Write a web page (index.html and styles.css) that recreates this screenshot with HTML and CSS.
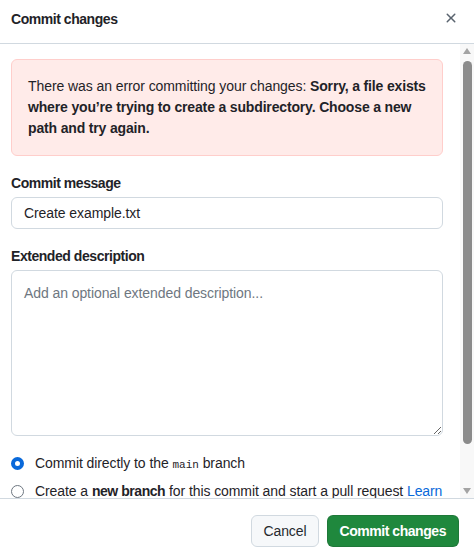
FILE: index.html
```html
<!DOCTYPE html>
<html lang="en">
<head>
<meta charset="utf-8">
<title>Commit changes</title>
<link rel="stylesheet" href="styles.css">
</head>
<body>
<div class="dialog">
  <header class="dialog-header">
    <h1 class="dialog-title">Commit changes</h1>
    <button class="close-btn" type="button" aria-label="Close">
      <svg viewBox="0 0 16 16" width="16" height="16" aria-hidden="true"><path d="M3.72 3.72a.75.75 0 0 1 1.06 0L8 6.94l3.22-3.22a.749.749 0 0 1 1.275.326.749.749 0 0 1-.215.734L9.06 8l3.22 3.220a.749.749 0 0 1-.326 1.275.749.749 0 0 1-.734-.215L8 9.06l-3.22 3.22a.751.751 0 0 1-1.042-.018.751.751 0 0 1-.018-1.042L6.940 8 3.720 4.78a.75.75 0 0 1 0-1.060Z"/></svg>
    </button>
  </header>
  <div class="dialog-body">
    <div class="body-content">
      <div class="flash-error">There was an error committing your changes: <strong>Sorry, a file exists where you’re trying to create a subdirectory. Choose a new path and try again.</strong></div>
      <label class="field-label" for="msg">Commit message</label>
      <input id="msg" class="text-input" type="text" value="Create example.txt">
      <label class="field-label" for="desc">Extended description</label>
      <textarea id="desc" class="text-area" placeholder="Add an optional extended description..."></textarea>
      <div class="radio-group">
        <label class="radio-row"><input type="radio" name="branch" class="radio" checked><span class="radio-text">Commit directly to the <code>main</code> branch</span></label>
        <label class="radio-row"><input type="radio" name="branch" class="radio"><span class="radio-text">Create a <strong>new branch</strong> for this commit and start a pull request <a class="link" href="#">Learn more about pull requests</a></span></label>
      </div>
    </div>
    <div class="scrollbar" aria-hidden="true">
      <span class="sb-arrow sb-up"></span>
      <span class="sb-thumb"></span>
      <span class="sb-spacer"></span>
      <span class="sb-arrow sb-down"></span>
    </div>
  </div>
  <footer class="dialog-footer">
    <button class="btn btn-default" type="button">Cancel</button>
    <button class="btn btn-primary" type="button">Commit changes</button>
  </footer>
</div>
</body>
</html>
```

FILE: styles.css
```css
* { box-sizing: border-box; }

html, body {
  margin: 0;
  padding: 0;
  background: #ffffff;
}

body {
  font-family: "Liberation Sans", Arial, sans-serif;
  font-size: 14px;
  line-height: 20px;
  color: #1f2328;
  letter-spacing: -0.08px;
}

.dialog {
  width: 474px;
  height: 560px;
  display: flex;
  flex-direction: column;
  background: #ffffff;
  overflow: hidden;
}

.dialog-header {
  height: 44px;
  flex: none;
  display: flex;
  align-items: flex-start;
  justify-content: space-between;
  padding: 9px 15px 0 11px;
  border-bottom: 1px solid #d1d9e0;
}

.dialog-title {
  margin: 0;
  font-size: 14px;
  line-height: 20px;
  font-weight: 700;
  letter-spacing: -0.45px;
}

.close-btn {
  width: 16px;
  height: 16px;
  margin-top: 1px;
  padding: 0;
  border: 0;
  background: transparent;
  display: flex;
}

.close-btn svg {
  fill: #59636e;
}

.dialog-body {
  flex: 1;
  min-height: 0;
  display: flex;
  overflow: hidden;
}

.body-content {
  flex: 1;
  min-width: 0;
  padding: 15px 17px 0 11px;
  overflow: hidden;
}

.flash-error {
  background: #ffebe9;
  border: 1px solid #ffcecb;
  border-radius: 6px;
  padding: 16px 12px 16px 16px;
  line-height: 21px;
}

.flash-error strong {
  font-weight: 700;
  letter-spacing: -0.16px;
}

.radio-text strong {
  font-weight: 700;
  letter-spacing: -0.45px;
}

.field-label {
  display: block;
  margin: 17px 0 4px;
  font-weight: 700;
  letter-spacing: -0.45px;
  line-height: 20px;
}

.text-input,
.text-area {
  display: block;
  width: 100%;
  font-family: inherit;
  font-size: 14px;
  line-height: 20px;
  color: #1f2328;
  letter-spacing: -0.08px;
  background: #ffffff;
  border: 1px solid #d1d9e0;
  border-radius: 6px;
  outline: none;
}

.text-input {
  height: 32px;
  padding: 0 12px;
}

.text-area {
  height: 166px;
  padding: 12px;
  resize: vertical;
}

.text-area::placeholder {
  color: #6e7781;
  opacity: 1;
}

.radio-group {
  margin-top: 17px;
  display: flex;
  flex-direction: column;
  gap: 8px;
}

.radio-row {
  display: flex;
  align-items: flex-start;
  line-height: 20px;
}

.radio {
  appearance: none;
  -webkit-appearance: none;
  flex: none;
  width: 13px;
  height: 13px;
  margin: 4px 11px 0 0;
  border: 1px solid #6e7781;
  border-radius: 50%;
  background: #ffffff;
}

.radio:checked {
  border: 4px solid #0969da;
}

.radio-text code {
  font-family: "Liberation Mono", "DejaVu Sans Mono", monospace;
  font-size: 11px;
  line-height: 1;
  letter-spacing: 0;
}

.link {
  color: #0969da;
  text-decoration: none;
}

.scrollbar {
  flex: none;
  width: 14px;
  background: #f8f8f8;
  display: flex;
  flex-direction: column;
  align-items: center;
}

.sb-arrow {
  width: 0;
  height: 0;
  border-left: 4px solid transparent;
  border-right: 4px solid transparent;
}

.sb-up {
  margin-top: 4px;
  border-bottom: 6px solid #a3a3a3;
}

.sb-down {
  margin-bottom: 4px;
  border-top: 6px solid #a3a3a3;
}

.sb-thumb {
  margin-top: 7px;
  width: 9px;
  height: 383px;
  border-radius: 5px;
  background: #8b8b8b;
}

.sb-spacer {
  flex: 1;
}

.dialog-footer {
  flex: none;
  height: 62px;
  border-top: 1px solid #d1d9e0;
  padding: 16px 15px 0;
  display: flex;
  justify-content: flex-end;
  align-items: flex-start;
  gap: 8px;
}

.btn {
  height: 32px;
  border-radius: 6px;
  font-family: inherit;
  font-size: 14px;
  line-height: 20px;
  cursor: pointer;
}

.btn-default {
  padding: 0 11px;
  background: #f6f8fa;
  border: 1px solid #d1d9e0;
  color: #25292e;
  letter-spacing: -0.08px;
}

.btn-primary {
  padding: 0 12px;
  background: #1f883d;
  border: 1px solid rgba(31, 35, 40, 0.15);
  color: #ffffff;
  font-weight: 700;
  letter-spacing: -0.45px;
}
```
